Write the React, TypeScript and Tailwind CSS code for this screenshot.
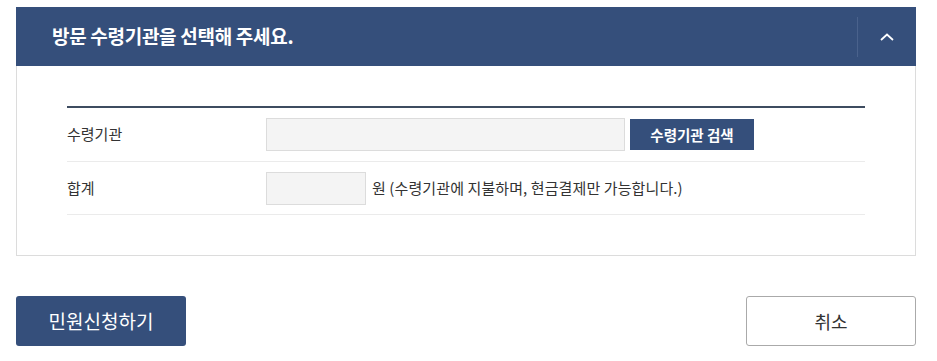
const font = { fontFamily: '"Noto Sans CJK KR", "Noto Sans", sans-serif' };

export default function App() {
  return (
    <div className="min-h-[361px] bg-white pl-4 pt-[7px] text-[#333]" style={font}>
      <div className="w-[900px]">
        <section>
          <header className="flex h-[59px] items-center bg-[#354f7b]">
            <h2 className="flex-1 pl-9 text-[19px] font-bold tracking-[-0.3px] text-white">
              방문 수령기관을 선택해 주세요.
            </h2>
            <button className="flex h-10 w-[59px] items-center justify-center border-l border-[#4a628c]">
              <svg viewBox="0 0 14 8" className="h-[8px] w-[14px]" fill="none" stroke="white" strokeWidth="1.8">
                <path d="M1 7l6-5.5L13 7" />
              </svg>
            </button>
          </header>
          <div className="border border-t-0 border-[#dcdcdc] px-[50px] pb-10 pt-10">
            <div className="border-t-2 border-[#3e4c60]">
              <div className="flex h-[54px] items-center border-b border-[#ebebeb]">
                <div className="w-[199px] text-[15px]">수령기관</div>
                <input className="h-[33px] w-[359px] border border-[#dcdcdc] bg-[#f4f4f4]" />
                <button className="ml-[5px] h-[31px] w-[124px] bg-[#354f7b] text-[14.5px] font-bold text-white">
                  수령기관 검색
                </button>
              </div>
              <div className="flex h-[53px] items-center border-b border-[#ebebeb]">
                <div className="w-[199px] text-[15px]">합계</div>
                <input className="h-[33px] w-[100px] border border-[#dcdcdc] bg-[#f4f4f4]" />
                <span className="ml-[6px] text-[15px] tracking-[0.1px]">원 (수령기관에 지불하며, 현금결제만 가능합니다.)</span>
              </div>
            </div>
          </div>
        </section>
        <div className="mt-10 flex justify-between">
          <button className="h-[50px] w-[170px] rounded-[3px] bg-[#354f7b] text-[19px] text-white">민원신청하기</button>
          <button className="h-[50px] w-[170px] rounded-[3px] border border-[#aaaaaa] bg-white text-[18px] text-[#333]">
            취소
          </button>
        </div>
      </div>
    </div>
  );
}
